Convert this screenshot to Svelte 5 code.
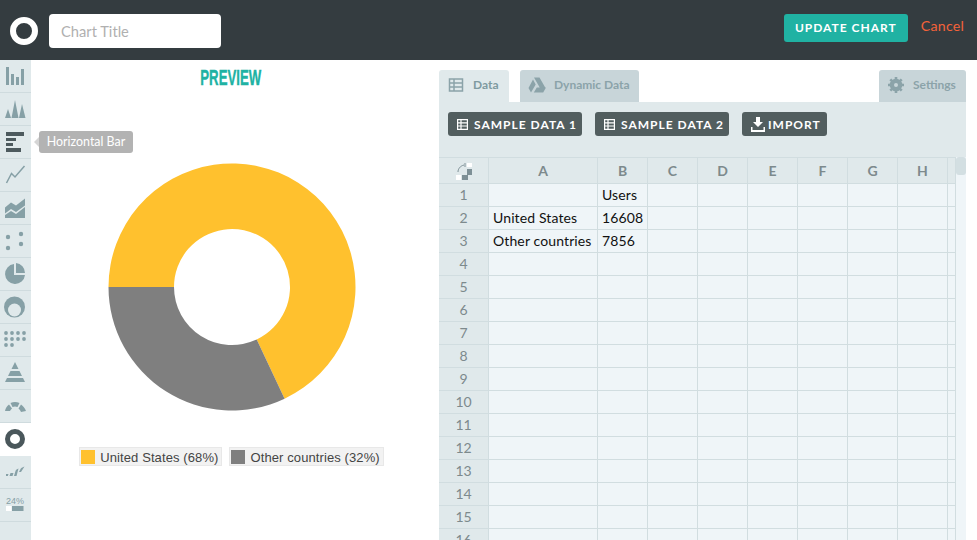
<script>
  const cols = [['A',109],['B',50],['C',50],['D',50],['E',50],['F',50],['G',50],['H',50],['',8]];
  const data = { 1:['','Users'], 2:['United States','16608'], 3:['Other countries','7856'] };
  const rows = Array.from({length:16},(_,i)=>i+1);
  const side = ['bar','spike','hbar','line','area','scatter','pie','semi','dots','pyramid','gauge','donut','spark','pct'];
</script>

<div class="page">
  <header class="top">
    <div class="logo"></div>
    <div class="title">Chart Title</div>
    <div class="spacer"></div>
    <div class="update">UPDATE CHART</div>
    <div class="cancel">Cancel</div>
  </header>
  <div class="main">
    <nav class="side">
      {#each side as s}
        <div class="item" class:active={s==='donut'}>
          <svg width="31" height="32" viewBox="0 0 31 32">
            {#if s==='bar'}
              <path fill="#86a0a6" d="M6 7h3v18H6zM11 14h3v11h-3zM16 17h3v8h-3zM21 9h3v16h-3z"/>
            {:else if s==='spike'}
              <path fill="#86a0a6" d="M5 25l3-9 3 9zM11.500 25l3.500-18 3.500 18zM19 25l3-14 3.500 14z"/>
            {:else if s==='hbar'}
              <path fill="#4d5a5e" d="M6 6h18v4H6zM6 12h10v3H6zM6 17h7v3H6zM6 22h15v4H6z"/>
            {:else if s==='line'}
              <path fill="none" stroke="#86a0a6" stroke-width="1.500" d="M6.500 24l5-9.500 3.500 3.500 9.500-11"/>
            {:else if s==='area'}
              <path fill="#86a0a6" d="M5 15.500l6-5 5 3 9-7v7l-9 6.500-5-3-6 4.500zM5 26v-3l6-4 5 3 9-7v11z"/>
            {:else if s==='scatter'}
              <g fill="#86a0a6"><circle cx="8" cy="12" r="2.200"/><circle cx="21" cy="9" r="2.200"/><circle cx="8" cy="23" r="2.200"/><circle cx="21" cy="19" r="2.200"/></g>
            {:else if s==='pie'}
              <path fill="#86a0a6" d="M14 6v11h11A10 10 0 1 1 14 6zM16 5a10 10 0 0 1 9 10h-9z"/>
            {:else if s==='semi'}
              <circle cx="14.500" cy="16" r="10.500" fill="#86a0a6"/><circle cx="14.500" cy="19" r="6.500" fill="#e0e9eb"/>
            {:else if s==='dots'}
              <g fill="#86a0a6">
                {#each [0,1,2] as r}
                  {#each r===2?[0,1]:[0,1,2,3] as c}
                    <circle cx={6+c*6} cy={9+r*6} r="1.900"/>
                  {/each}
                {/each}
              </g>
            {:else if s==='pyramid'}
              <path fill="#86a0a6" d="M15 5l3.500 7h-7zM10.500 14h9l2.500 5H8zM7 21h16l2 4H5z"/>
            {:else if s==='gauge'}
              <path fill="#86a0a6" d="M5 21c.5-3 2-5 4-6.500l3 4c-1 .7-1.500 1.500-2 2.500zM10.500 13c3-1.500 6-1.500 9 0l-2 4c-2-.8-3-.8-5 0zM21 14.500c2 1.500 4 3.500 5 6.500l-5 1c-.5-1.500-1.500-2.500-2.500-3.500z"/>
            {:else if s==='donut'}
              <circle cx="15" cy="16" r="7.500" fill="none" stroke="#4a575b" stroke-width="5"/>
            {:else if s==='spark'}
              <path fill="#86a0a6" d="M6 18h2.500l-.7 2H6zM10.500 17h3l-1 3h-3zM15.500 15c.5-1.500 1.500-2 3-2.500l-2 7.500H14zM20.500 13c1-1.500 2.500-2 4-2.500L21 16h-2z"/>
            {:else if s==='pct'}
              <text class="pct" x="6" y="15">24%</text>
              <rect x="6" y="17" width="5.500" height="5" fill="#fff"/><rect x="12" y="17" width="11.500" height="5" fill="#86a0a6"/>
            {/if}
          </svg>
        </div>
      {/each}
      <div class="item"></div>
      <div class="tip">Horizontal Bar</div>
    </nav>
    <section class="preview">
      <h2>PREVIEW</h2>
      <svg class="donut" width="248" height="248" viewBox="-124 -124 248 248">
        <path fill="#ffc12e" d="M-123.500 0A123.500 123.500 0 1 1 52.600 111.700L24.700 52.500A58 58 0 1 0 -58 0Z"/>
        <path fill="#7f7f7f" d="M-123.500 0A123.500 123.500 0 0 0 52.600 111.700L24.700 52.500A58 58 0 0 1 -58 0Z"/>
      </svg>
      <div class="legend">
        <div class="lg"><i class="y"></i>United States (68%)</div>
        <div class="lg"><i class="g"></i>Other countries (32%)</div>
      </div>
    </section>
    <section class="panel">
      <div class="tabs">
        <div class="tab on">
          <svg width="16" height="16" viewBox="0 0 16 16"><path fill="none" stroke="#8ba3a9" stroke-width="1.500" d="M1.500 2h13v12h-13zM1.500 6h13M1.500 10h13M6 2v12"/></svg>
          <span>Data</span>
        </div>
        <div class="tab dyn">
          <svg width="18" height="16" viewBox="0 0 18 16"><path fill="#8ba3a9" d="M6 .500h5.500l6 10.500h-5.500zM5 2.500l2.700 5L3 15.500.5 11zM8.800 10.500H18l-2.800 5H5.800z"/></svg>
          <span>Dynamic Data</span>
        </div>
        <div class="spacer"></div>
        <div class="tab set">
          <svg width="16" height="16" viewBox="0 0 16 16"><circle cx="8" cy="8" r="4.700" fill="none" stroke="#8ba3a9" stroke-width="3.200"/><path stroke="#8ba3a9" stroke-width="2.600" d="M8 0v16M0 8h16M2.300 2.300l11.400 11.400M13.700 2.300L2.300 13.700"/><circle cx="8" cy="8" r="2" fill="#c8d5d9"/></svg>
          <span>Settings</span>
        </div>
      </div>
      <div class="body">
        <div class="tools">
          <div class="btn s"><svg width="11" height="11" viewBox="0 0 11 11"><path fill="none" stroke="#fff" stroke-width="1.200" d="M.6.600h9.800v9.800H.6zM.6 3.800h9.800M.6 7h9.800M4 .6v9.800"/></svg>SAMPLE DATA 1</div>
          <div class="btn s"><svg width="11" height="11" viewBox="0 0 11 11"><path fill="none" stroke="#fff" stroke-width="1.200" d="M.6.600h9.800v9.800H.6zM.6 3.800h9.800M.6 7h9.800M4 .6v9.800"/></svg>SAMPLE DATA 2</div>
          <div class="btn i"><svg width="14" height="15" viewBox="0 0 14 15"><path fill="#fff" d="M5 0h4v5h3L7 10 2 5h3zM0 10h1.500v3h11v-3H14v5H0z"/></svg>IMPORT</div>
        </div>
        <div class="sheet">
          <div class="grid">
            <div class="hrow">
              <div class="corner">
                <svg width="18" height="18" viewBox="0 0 18 18"><path fill="#fff" d="M1 13h5v5H1zM12 1h5v4h-5z"/><path fill="#7e9096" d="M7 13h6v5H7zM12 7h5v6h-5z"/><path fill="none" stroke="#7e9096" d="M3 10c0-3 2-6 6-7M10 1v4"/></svg>
              </div>
              {#each cols as [c,w]}
                <div class="hc" style="width:{w}px">{c}</div>
              {/each}
            </div>
            {#each rows as r}
              <div class="row">
                <div class="rh">{r}</div>
                {#each cols as [c,w],i}
                  <div class="cell" style="width:{w}px">{data[r]?.[i] ?? ''}</div>
                {/each}
              </div>
            {/each}
          </div>
          <div class="bar"><div class="thumb"></div></div>
        </div>
      </div>
    </section>
  </div>
</div>

<style>
  :global(body){margin:0;background:#fff;overflow:hidden}
  .page{width:977px;height:540px;overflow:hidden;font-family:Lato,sans-serif;display:flex;flex-direction:column}
  .top{height:60px;flex:none;background:#343c40;display:flex;align-items:center;box-sizing:border-box;padding-left:10px}
  .logo{width:28px;height:28px;border-radius:50%;border:6.500px solid #fff;box-sizing:border-box;margin-top:2px}
  .title{margin:2px 0 0 11px;width:172px;height:34px;background:#fff;border-radius:4px;color:#b0b0b0;font-size:14.700px;line-height:34px;padding-left:12px;box-sizing:border-box}
  .spacer{flex:1}
  .update{width:124px;height:28px;margin-top:-4px;background:#20b2a3;border-radius:3px;color:#fff;font-weight:700;font-size:12px;letter-spacing:1px;line-height:28px;text-align:center}
  .cancel{color:#f4623a;font-size:14.200px;margin:-10px 13px 0 13px;letter-spacing:.2px}
  .main{display:flex;flex:1;min-height:0}
  .side{width:31px;flex:none;background:#e0e9eb;position:relative}
  .item{height:33px;box-sizing:border-box;border-bottom:1px solid #cfdbde;overflow:hidden}
  .item svg{display:block}
  .item.active{background:#fff;border-bottom-color:#fff}
  .pct{font:9px "Liberation Sans",sans-serif;fill:#86a0a6}
  .tip{position:absolute;left:39px;top:71px;width:94px;height:22px;background:#b3b3b3;border-radius:3px;color:#fff;font-size:12.400px;line-height:22px;text-align:center;white-space:nowrap}
  .tip::before{content:"";position:absolute;left:-5px;top:6px;border:5px solid transparent;border-left:0;border-right-color:#d5d5d5}
  .preview{width:408px;flex:none;display:flex;flex-direction:column;align-items:center;position:relative}
  h2{margin:7px 0 0 -9px;height:20px;font-size:22px;line-height:22px;font-weight:700;font-family:"Liberation Sans",sans-serif;color:#20b2a3;transform:scaleX(.6);letter-spacing:0;-webkit-text-stroke:.4px #20b2a3}
  .donut{display:block;margin:76px 0 0 -7px}
  .legend{display:flex;gap:7px;margin:36px 0 0 -7px;font:13px "Liberation Sans",sans-serif;color:#444}
  .lg{height:19px;background:#f2f2f2;display:flex;align-items:center;padding:1px 3px 0 1px;border:1px solid #e8e8e8;box-sizing:border-box;letter-spacing:.1px}
  .lg i{width:14px;height:14px;margin:-1px 5px 0 0}
  .y{background:#ffc12e}.g{background:#7f7f7f}
  .panel{width:527px;flex:none;padding-top:10px;display:flex;flex-direction:column}
  .tabs{height:32px;display:flex;gap:11px;flex:none}
  .tab{height:32px;border-radius:3px 3px 0 0;display:flex;align-items:center;font-size:12px;box-sizing:border-box;white-space:nowrap;padding-bottom:3px}
  .tab span{color:#8ba3a9;font-weight:700}
  .tab.on{width:70px;background:#e0e9eb;padding-left:9px;gap:9px}
  .tab.on span{color:#7e9aa0}
  .dyn{width:119px;background:#c8d5d9;padding-left:8px;gap:8px}
  .set{width:87px;background:#c8d5d9;padding-left:9px;gap:9px}
  .body{background:#e0e9eb;flex:1;min-height:0;overflow:hidden}
  .tools{display:flex;gap:13px;padding:10px 0 0 9px;height:55px;box-sizing:border-box}
  .btn{height:24px;background:#525e5f;border-radius:3px;color:#fff;font-size:12px;font-weight:700;letter-spacing:1px;display:flex;align-items:center;white-space:nowrap;box-sizing:border-box}
  .s{width:134px;padding-left:9px;gap:6px}
  .i{width:85px;padding-left:9px;gap:3px}
  .sheet{display:flex;position:relative}
  .grid{width:517px;border-top:1px solid #d1dde0}
  .hrow{display:flex;height:26px;background:#e0e9eb;box-sizing:border-box;border-bottom:1px solid #d1dde0}
  .corner{width:50px;flex:none;box-sizing:border-box;border-right:1px solid #d1dde0;display:flex;align-items:center;justify-content:center}
  .hc{flex:none;box-sizing:border-box;border-right:1px solid #d1dde0;text-align:center;color:#7d8a8d;font-weight:700;font-size:14px;line-height:25px}
  .row{display:flex;height:23px;box-sizing:border-box;border-bottom:1px solid #d1dde0;background:#eff5f8}
  .rh{width:50px;flex:none;box-sizing:border-box;background:#e0e9eb;border-right:1px solid #d1dde0;text-align:center;color:#7d8a8d;font-size:14px;line-height:22px;font-weight:400}
  .cell{flex:none;box-sizing:border-box;border-right:1px solid #d1dde0;color:#111;font-size:14px;letter-spacing:.12px;line-height:22px;padding-left:4px;white-space:nowrap;overflow:hidden}
  .bar{width:10px;flex:none;background:#eff5f8}
  .thumb{height:18px;background:#d3dfe2;border-radius:3px}
</style>
